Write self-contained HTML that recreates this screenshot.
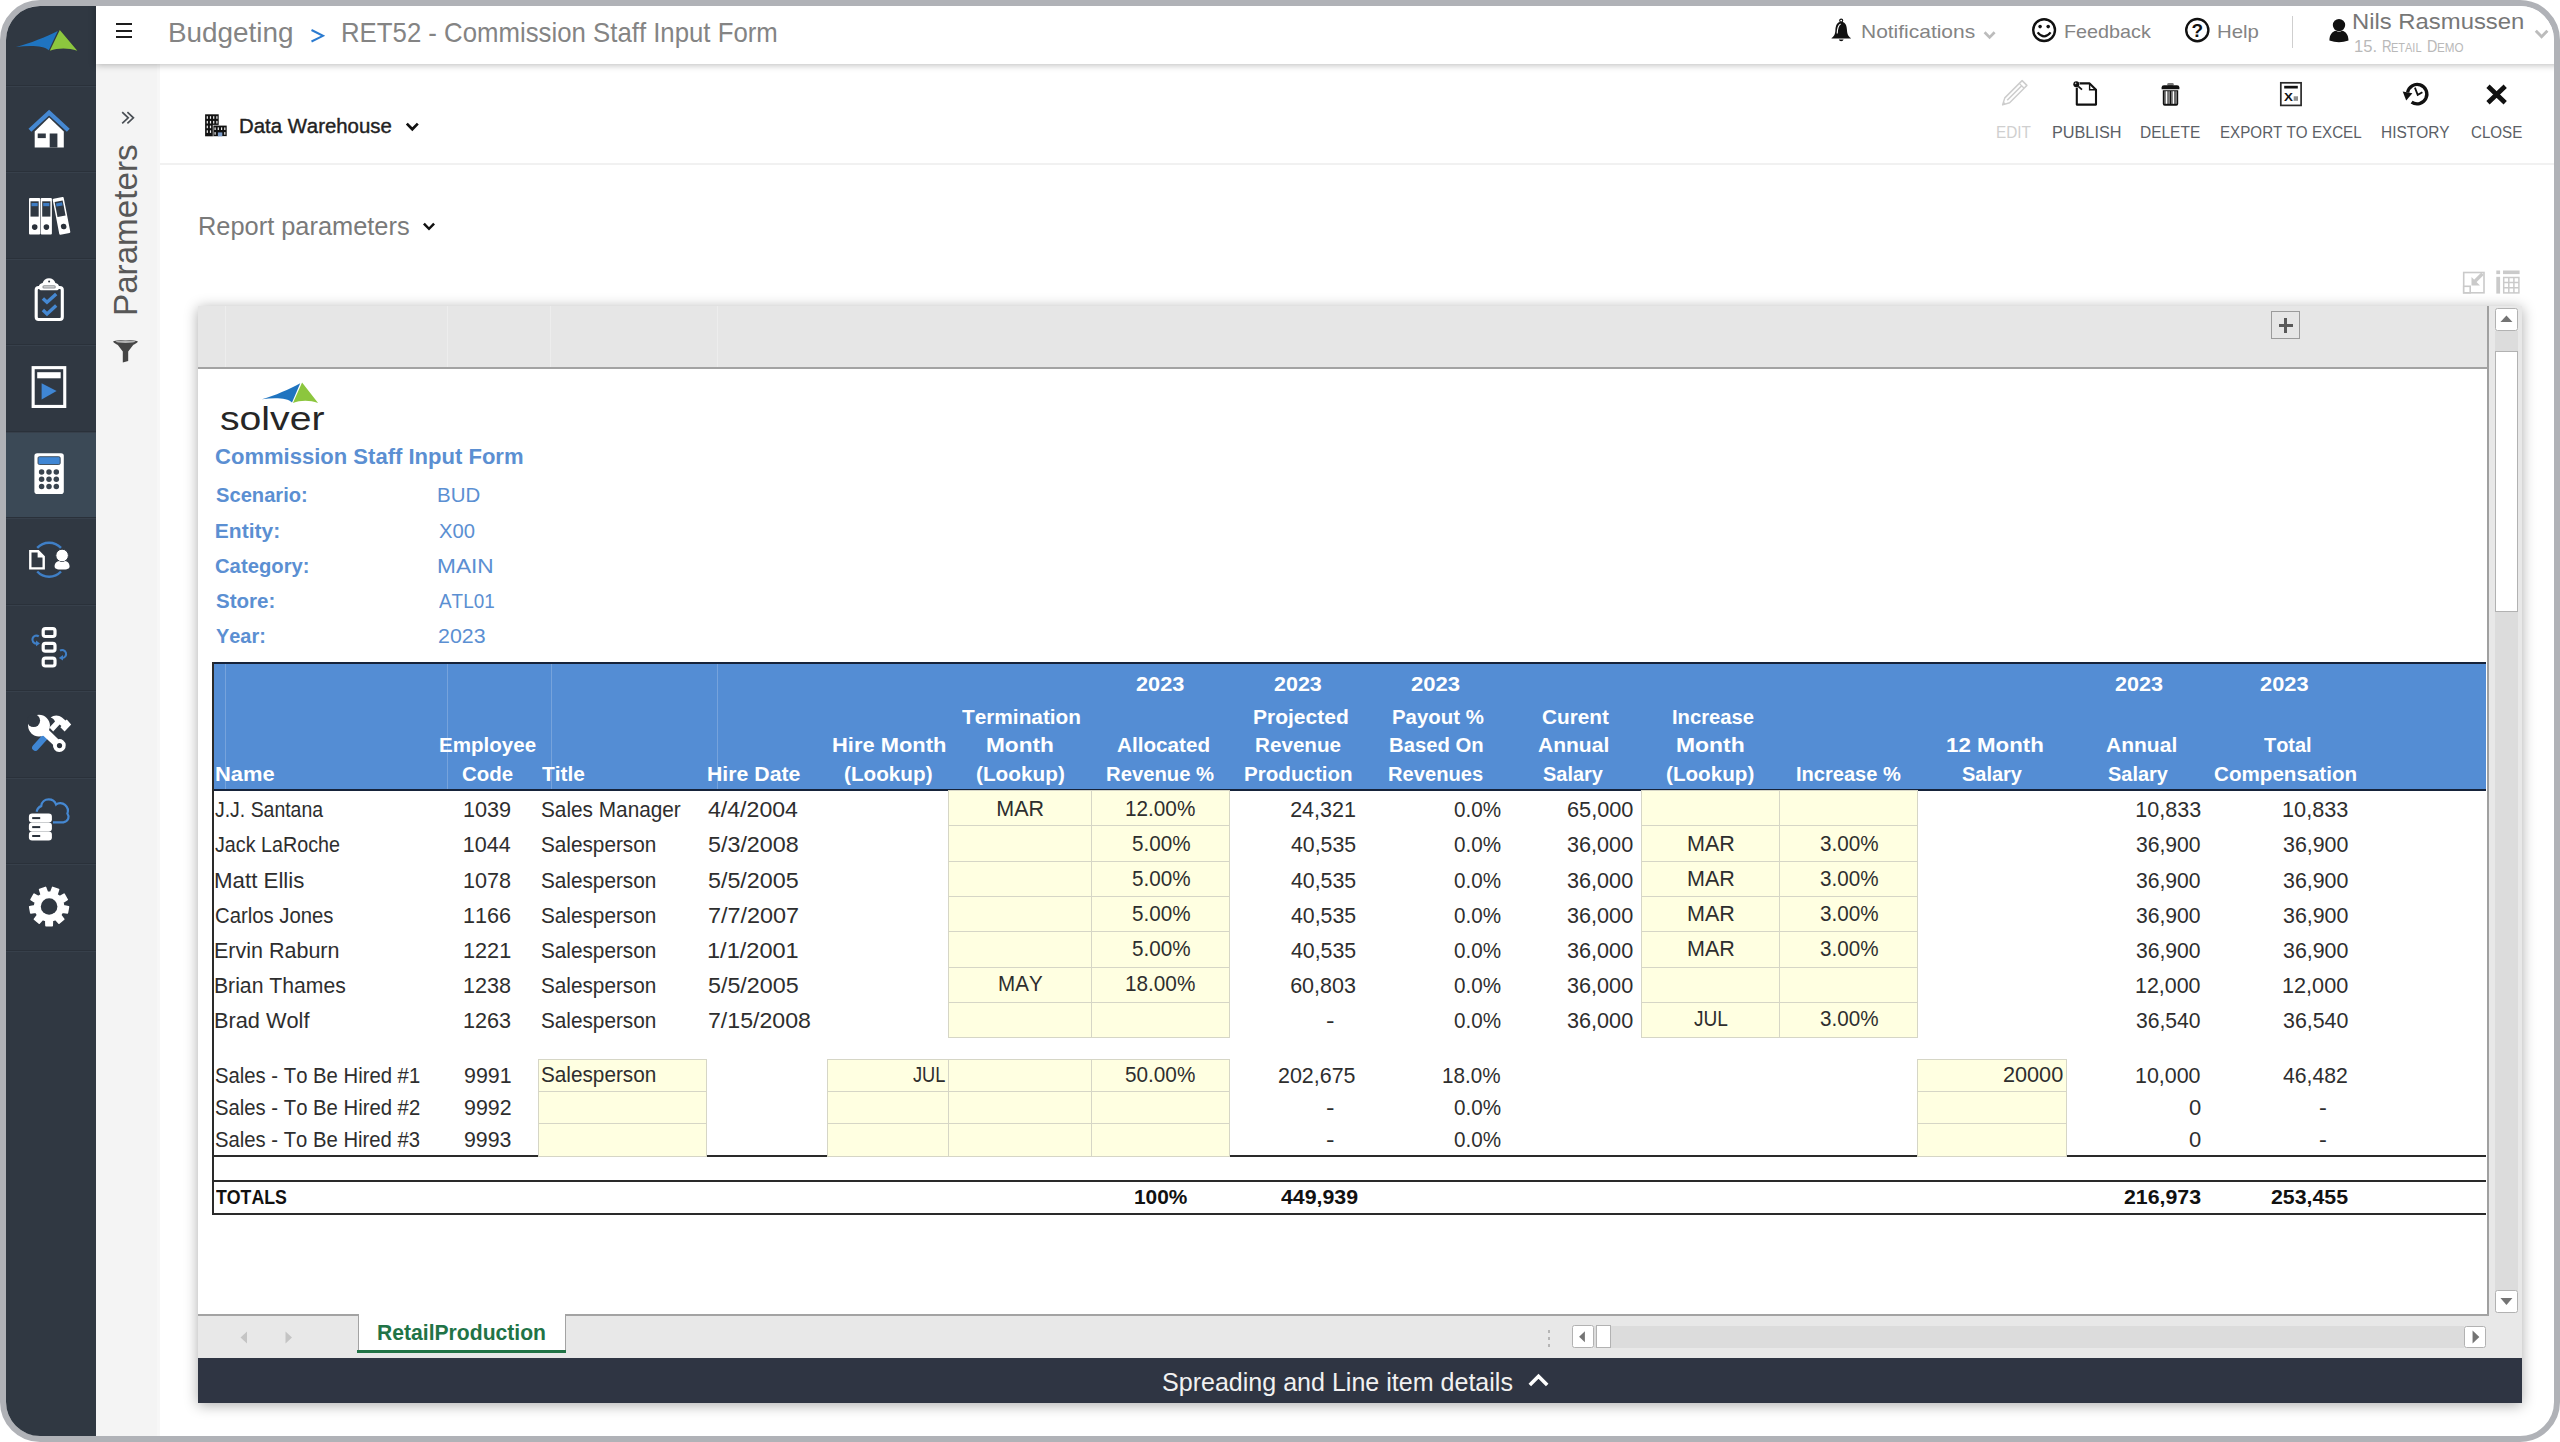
<!DOCTYPE html>
<html><head><meta charset="utf-8"><title>RET52 - Commission Staff Input Form</title>
<style>
html,body{margin:0;padding:0;background:#fff;}
body{width:2560px;height:1442px;overflow:hidden;position:relative;font-family:"Liberation Sans",sans-serif;font-kerning:none;}
#frame{position:absolute;left:0;top:0;width:2548px;height:1430px;border:6px solid #b0b2b7;border-radius:40px;overflow:hidden;background:#fff;}
#pg{position:absolute;left:-6px;top:-6px;width:2560px;height:1442px;}
#pg div,#pg span,#pg svg{position:absolute;}
.t{white-space:nowrap;line-height:1;transform-origin:0 50%;z-index:5;}
</style></head><body><div id="frame"><div id="pg">
<div style="left:0px;top:0px;width:96px;height:1442px;background:#303842;"></div>
<div style="left:6px;top:432px;width:90px;height:86px;background:#3b4956;"></div>
<div style="left:6px;top:84.5px;width:90px;height:1px;background:#2a313a;"></div>
<div style="left:6px;top:85.5px;width:90px;height:1px;background:#37404b;"></div>
<div style="left:6px;top:171px;width:90px;height:1px;background:#2a313a;"></div>
<div style="left:6px;top:172px;width:90px;height:1px;background:#37404b;"></div>
<div style="left:6px;top:257.5px;width:90px;height:1px;background:#2a313a;"></div>
<div style="left:6px;top:258.5px;width:90px;height:1px;background:#37404b;"></div>
<div style="left:6px;top:344px;width:90px;height:1px;background:#2a313a;"></div>
<div style="left:6px;top:345px;width:90px;height:1px;background:#37404b;"></div>
<div style="left:6px;top:430.5px;width:90px;height:1px;background:#2a313a;"></div>
<div style="left:6px;top:431.5px;width:90px;height:1px;background:#37404b;"></div>
<div style="left:6px;top:517px;width:90px;height:1px;background:#2a313a;"></div>
<div style="left:6px;top:518px;width:90px;height:1px;background:#37404b;"></div>
<div style="left:6px;top:603.5px;width:90px;height:1px;background:#2a313a;"></div>
<div style="left:6px;top:604.5px;width:90px;height:1px;background:#37404b;"></div>
<div style="left:6px;top:690px;width:90px;height:1px;background:#2a313a;"></div>
<div style="left:6px;top:691px;width:90px;height:1px;background:#37404b;"></div>
<div style="left:6px;top:776.5px;width:90px;height:1px;background:#2a313a;"></div>
<div style="left:6px;top:777.5px;width:90px;height:1px;background:#37404b;"></div>
<div style="left:6px;top:863px;width:90px;height:1px;background:#2a313a;"></div>
<div style="left:6px;top:864px;width:90px;height:1px;background:#37404b;"></div>
<div style="left:6px;top:949.5px;width:90px;height:1px;background:#2a313a;"></div>
<div style="left:6px;top:950.5px;width:90px;height:1px;background:#37404b;"></div>
<div style="left:96px;top:64px;width:64px;height:1378px;background:#f4f4f4;"></div>
<div style="left:157px;top:64px;width:3px;height:1378px;background:#f7f7f7;"></div>
<div style="left:160px;top:163px;width:2400px;height:2px;background:#f1f1f1;"></div>
<div style="left:96px;top:0px;width:2464px;height:64px;background:#fff;box-shadow:0 1px 7px rgba(0,0,0,.28);"></div>
<div style="left:198px;top:306px;width:2324px;height:1097px;background:#fff;box-shadow:0 2px 13px rgba(0,0,0,.33);"></div>
<div style="left:198px;top:306px;width:2289px;height:61px;background:#e6e6e6;"></div>
<div style="left:224.5px;top:306px;width:1px;height:61px;background:rgba(255,255,255,.3);"></div>
<div style="left:447.0px;top:306px;width:1px;height:61px;background:rgba(255,255,255,.3);"></div>
<div style="left:550.0px;top:306px;width:1px;height:61px;background:rgba(255,255,255,.3);"></div>
<div style="left:717.0px;top:306px;width:1px;height:61px;background:rgba(255,255,255,.3);"></div>
<div style="left:198px;top:366.5px;width:2291px;height:2px;background:#a3a3a3;"></div>
<div style="left:2489px;top:306px;width:33px;height:1052px;background:#e8e8e8;"></div>
<div style="left:2487px;top:306px;width:2px;height:1010px;background:#a0a0a0;"></div>
<div style="left:2495px;top:331px;width:23px;height:960px;background:#dcdcdc;"></div>
<div style="left:198px;top:1315px;width:2324px;height:43px;background:#e8e8e8;"></div>
<div style="left:198px;top:1313.5px;width:2291px;height:2px;background:#a3a3a3;"></div>
<div style="left:198px;top:1358px;width:2324px;height:45px;background:#2f3543;"></div>
<div style="left:214px;top:664px;width:2272px;height:126px;background:#548dd4;"></div>
<div style="left:224.5px;top:664px;width:1px;height:126px;background:rgba(255,255,255,.2);"></div>
<div style="left:447.0px;top:664px;width:1px;height:126px;background:rgba(255,255,255,.2);"></div>
<div style="left:550.5px;top:664px;width:1px;height:126px;background:rgba(255,255,255,.2);"></div>
<div style="left:717.0px;top:664px;width:1px;height:126px;background:rgba(255,255,255,.2);"></div>
<div style="left:212px;top:662px;width:2274px;height:2px;background:#16233a;"></div>
<div style="left:212px;top:789px;width:2274px;height:2px;background:#16233a;"></div>
<div style="left:212px;top:662px;width:2px;height:553px;background:#2a2a2a;"></div>
<div style="left:212px;top:1155.2px;width:2274px;height:1.7px;background:#2a2a2a;"></div>
<div style="left:212px;top:1180.3px;width:2274px;height:1.7px;background:#2a2a2a;"></div>
<div style="left:212px;top:1213.2px;width:2274px;height:1.7px;background:#2a2a2a;"></div>
<div style="left:948.75px;top:790px;width:280.75px;height:247.5999999999999px;background:#ffffe1;"></div>
<div style="left:948.25px;top:789.5px;width:281.75px;height:1.2px;background:#d6d6c6;"></div>
<div style="left:948.25px;top:825.3px;width:281.75px;height:1.2px;background:#d6d6c6;"></div>
<div style="left:948.25px;top:860.6px;width:281.75px;height:1.2px;background:#d6d6c6;"></div>
<div style="left:948.25px;top:895.9px;width:281.75px;height:1.2px;background:#d6d6c6;"></div>
<div style="left:948.25px;top:931.2px;width:281.75px;height:1.2px;background:#d6d6c6;"></div>
<div style="left:948.25px;top:966.5px;width:281.75px;height:1.2px;background:#d6d6c6;"></div>
<div style="left:948.25px;top:1001.8px;width:281.75px;height:1.2px;background:#d6d6c6;"></div>
<div style="left:948.25px;top:1037.1px;width:281.75px;height:1.2px;background:#d6d6c6;"></div>
<div style="left:948.25px;top:789.5px;width:1.2px;height:248.5999999999999px;background:#d6d6c6;"></div>
<div style="left:1090.75px;top:789.5px;width:1.2px;height:248.5999999999999px;background:#d6d6c6;"></div>
<div style="left:1229.0px;top:789.5px;width:1.2px;height:248.5999999999999px;background:#d6d6c6;"></div>
<div style="left:1641.75px;top:790px;width:275.75px;height:247.5999999999999px;background:#ffffe1;"></div>
<div style="left:1641.25px;top:789.5px;width:276.75px;height:1.2px;background:#d6d6c6;"></div>
<div style="left:1641.25px;top:825.3px;width:276.75px;height:1.2px;background:#d6d6c6;"></div>
<div style="left:1641.25px;top:860.6px;width:276.75px;height:1.2px;background:#d6d6c6;"></div>
<div style="left:1641.25px;top:895.9px;width:276.75px;height:1.2px;background:#d6d6c6;"></div>
<div style="left:1641.25px;top:931.2px;width:276.75px;height:1.2px;background:#d6d6c6;"></div>
<div style="left:1641.25px;top:966.5px;width:276.75px;height:1.2px;background:#d6d6c6;"></div>
<div style="left:1641.25px;top:1001.8px;width:276.75px;height:1.2px;background:#d6d6c6;"></div>
<div style="left:1641.25px;top:1037.1px;width:276.75px;height:1.2px;background:#d6d6c6;"></div>
<div style="left:1641.25px;top:789.5px;width:1.2px;height:248.5999999999999px;background:#d6d6c6;"></div>
<div style="left:1779.0px;top:789.5px;width:1.2px;height:248.5999999999999px;background:#d6d6c6;"></div>
<div style="left:1917.0px;top:789.5px;width:1.2px;height:248.5999999999999px;background:#d6d6c6;"></div>
<div style="left:538.75px;top:1059.5px;width:167.5px;height:96.5px;background:#ffffe1;"></div>
<div style="left:538.25px;top:1059.0px;width:168.5px;height:1.2px;background:#d6d6c6;"></div>
<div style="left:538.25px;top:1090.75px;width:168.5px;height:1.2px;background:#d6d6c6;"></div>
<div style="left:538.25px;top:1123.25px;width:168.5px;height:1.2px;background:#d6d6c6;"></div>
<div style="left:538.25px;top:1155.5px;width:168.5px;height:1.2px;background:#d6d6c6;"></div>
<div style="left:538.25px;top:1059.0px;width:1.2px;height:97.5px;background:#d6d6c6;"></div>
<div style="left:705.75px;top:1059.0px;width:1.2px;height:97.5px;background:#d6d6c6;"></div>
<div style="left:827.5px;top:1059.5px;width:402.0px;height:96.5px;background:#ffffe1;"></div>
<div style="left:827.0px;top:1059.0px;width:403.0px;height:1.2px;background:#d6d6c6;"></div>
<div style="left:827.0px;top:1090.75px;width:403.0px;height:1.2px;background:#d6d6c6;"></div>
<div style="left:827.0px;top:1123.25px;width:403.0px;height:1.2px;background:#d6d6c6;"></div>
<div style="left:827.0px;top:1155.5px;width:403.0px;height:1.2px;background:#d6d6c6;"></div>
<div style="left:827.0px;top:1059.0px;width:1.2px;height:97.5px;background:#d6d6c6;"></div>
<div style="left:948.25px;top:1059.0px;width:1.2px;height:97.5px;background:#d6d6c6;"></div>
<div style="left:1090.75px;top:1059.0px;width:1.2px;height:97.5px;background:#d6d6c6;"></div>
<div style="left:1229.0px;top:1059.0px;width:1.2px;height:97.5px;background:#d6d6c6;"></div>
<div style="left:1917.25px;top:1059.5px;width:149.5px;height:96.5px;background:#ffffe1;"></div>
<div style="left:1916.75px;top:1059.0px;width:150.5px;height:1.2px;background:#d6d6c6;"></div>
<div style="left:1916.75px;top:1090.75px;width:150.5px;height:1.2px;background:#d6d6c6;"></div>
<div style="left:1916.75px;top:1123.25px;width:150.5px;height:1.2px;background:#d6d6c6;"></div>
<div style="left:1916.75px;top:1155.5px;width:150.5px;height:1.2px;background:#d6d6c6;"></div>
<div style="left:1916.75px;top:1059.0px;width:1.2px;height:97.5px;background:#d6d6c6;"></div>
<div style="left:2066.25px;top:1059.0px;width:1.2px;height:97.5px;background:#d6d6c6;"></div>
<span class="t" style="left:215.35px;top:447px;font-size:21.5px;font-weight:700;color:#5b8fd2;transform:scaleX(1.0250);">Commission Staff Input Form</span>
<span class="t" style="left:215.67px;top:484px;font-size:21px;font-weight:700;color:#5b8fd2;transform:scaleX(0.9589);">Scenario:</span>
<span class="t" style="left:437.32px;top:484px;font-size:21px;font-weight:400;color:#5b8fd2;transform:scaleX(0.9732);">BUD</span>
<span class="t" style="left:214.85px;top:520px;font-size:21px;font-weight:700;color:#5b8fd2;">Entity:</span>
<span class="t" style="left:438.55px;top:520px;font-size:21px;font-weight:400;color:#5b8fd2;transform:scaleX(0.9631);">X00</span>
<span class="t" style="left:215.42px;top:555px;font-size:21px;font-weight:700;color:#5b8fd2;transform:scaleX(0.9643);">Category:</span>
<span class="t" style="left:437.14px;top:555px;font-size:21px;font-weight:400;color:#5b8fd2;transform:scaleX(1.0802);">MAIN</span>
<span class="t" style="left:215.66px;top:590px;font-size:21px;font-weight:700;color:#5b8fd2;transform:scaleX(0.9774);">Store:</span>
<span class="t" style="left:438.96px;top:590px;font-size:21px;font-weight:400;color:#5b8fd2;transform:scaleX(0.9004);">ATL01</span>
<span class="t" style="left:215.91px;top:625px;font-size:21px;font-weight:700;color:#5b8fd2;transform:scaleX(0.9471);">Year:</span>
<span class="t" style="left:437.93px;top:625px;font-size:21px;font-weight:400;color:#5b8fd2;transform:scaleX(1.0170);">2023</span>
<span class="t" style="left:214.78px;top:765px;font-size:19.5px;font-weight:700;color:#fff;transform:scaleX(1.1241);">Name</span>
<span class="t" style="left:438.63px;top:736px;font-size:19.5px;font-weight:700;color:#fff;transform:scaleX(1.0538);">Employee</span>
<span class="t" style="left:461.66px;top:765px;font-size:19.5px;font-weight:700;color:#fff;transform:scaleX(1.0469);">Code</span>
<span class="t" style="left:542.27px;top:765px;font-size:19.5px;font-weight:700;color:#fff;transform:scaleX(1.0712);">Title</span>
<span class="t" style="left:707.33px;top:765px;font-size:19.5px;font-weight:700;color:#fff;transform:scaleX(1.0908);">Hire Date</span>
<span class="t" style="left:831.54px;top:736px;font-size:19.5px;font-weight:700;color:#fff;transform:scaleX(1.1227);">Hire Month</span>
<span class="t" style="left:844.47px;top:765px;font-size:19.5px;font-weight:700;color:#fff;transform:scaleX(1.0620);">(Lookup)</span>
<span class="t" style="left:961.77px;top:708px;font-size:19.5px;font-weight:700;color:#fff;transform:scaleX(1.0666);">Termination</span>
<span class="t" style="left:986.49px;top:736px;font-size:19.5px;font-weight:700;color:#fff;transform:scaleX(1.1613);">Month</span>
<span class="t" style="left:975.97px;top:765px;font-size:19.5px;font-weight:700;color:#fff;transform:scaleX(1.0651);">(Lookup)</span>
<span class="t" style="left:1136.25px;top:675px;font-size:19.5px;font-weight:700;color:#fff;transform:scaleX(1.1128);">2023</span>
<span class="t" style="left:1116.98px;top:736px;font-size:19.5px;font-weight:700;color:#fff;transform:scaleX(1.0609);">Allocated</span>
<span class="t" style="left:1106.14px;top:765px;font-size:19.5px;font-weight:700;color:#fff;transform:scaleX(1.0393);">Revenue %</span>
<span class="t" style="left:1274.26px;top:675px;font-size:19.5px;font-weight:700;color:#fff;transform:scaleX(1.1009);">2023</span>
<span class="t" style="left:1253.09px;top:708px;font-size:19.5px;font-weight:700;color:#fff;transform:scaleX(1.0778);">Projected</span>
<span class="t" style="left:1254.62px;top:736px;font-size:19.5px;font-weight:700;color:#fff;transform:scaleX(1.0589);">Revenue</span>
<span class="t" style="left:1243.62px;top:765px;font-size:19.5px;font-weight:700;color:#fff;transform:scaleX(1.0557);">Production</span>
<span class="t" style="left:1411.24px;top:675px;font-size:19.5px;font-weight:700;color:#fff;transform:scaleX(1.1307);">2023</span>
<span class="t" style="left:1392.38px;top:708px;font-size:19.5px;font-weight:700;color:#fff;transform:scaleX(1.0470);">Payout %</span>
<span class="t" style="left:1388.64px;top:736px;font-size:19.5px;font-weight:700;color:#fff;transform:scaleX(1.0393);">Based On</span>
<span class="t" style="left:1388.15px;top:765px;font-size:19.5px;font-weight:700;color:#fff;transform:scaleX(1.0329);">Revenues</span>
<span class="t" style="left:1542.15px;top:708px;font-size:19.5px;font-weight:700;color:#fff;transform:scaleX(1.0638);">Curent</span>
<span class="t" style="left:1538.23px;top:736px;font-size:19.5px;font-weight:700;color:#fff;transform:scaleX(1.0782);">Annual</span>
<span class="t" style="left:1543.18px;top:765px;font-size:19.5px;font-weight:700;color:#fff;transform:scaleX(1.0234);">Salary</span>
<span class="t" style="left:1672.40px;top:708px;font-size:19.5px;font-weight:700;color:#fff;transform:scaleX(1.0365);">Increase</span>
<span class="t" style="left:1676.47px;top:736px;font-size:19.5px;font-weight:700;color:#fff;transform:scaleX(1.1747);">Month</span>
<span class="t" style="left:1666.47px;top:765px;font-size:19.5px;font-weight:700;color:#fff;transform:scaleX(1.0590);">(Lookup)</span>
<span class="t" style="left:1795.66px;top:765px;font-size:19.5px;font-weight:700;color:#fff;transform:scaleX(1.0291);">Increase %</span>
<span class="t" style="left:1946.10px;top:736px;font-size:19.5px;font-weight:700;color:#fff;transform:scaleX(1.1424);">12 Month</span>
<span class="t" style="left:1961.93px;top:765px;font-size:19.5px;font-weight:700;color:#fff;transform:scaleX(1.0234);">Salary</span>
<span class="t" style="left:2114.75px;top:675px;font-size:19.5px;font-weight:700;color:#fff;transform:scaleX(1.1069);">2023</span>
<span class="t" style="left:2105.73px;top:736px;font-size:19.5px;font-weight:700;color:#fff;transform:scaleX(1.0782);">Annual</span>
<span class="t" style="left:2108.18px;top:765px;font-size:19.5px;font-weight:700;color:#fff;transform:scaleX(1.0234);">Salary</span>
<span class="t" style="left:2260.49px;top:675px;font-size:19.5px;font-weight:700;color:#fff;transform:scaleX(1.1188);">2023</span>
<span class="t" style="left:2264.28px;top:736px;font-size:19.5px;font-weight:700;color:#fff;transform:scaleX(1.0224);">Total</span>
<span class="t" style="left:2213.65px;top:765px;font-size:19.5px;font-weight:700;color:#fff;transform:scaleX(1.0567);">Compensation</span>
<span class="t" style="left:215.45px;top:800px;font-size:21.5px;font-weight:400;color:#2e2e2e;transform:scaleX(0.9040);">J.J. Santana</span>
<span class="t" style="left:462.85px;top:800px;font-size:21.5px;font-weight:400;color:#2e2e2e;transform:scaleX(1.0069);">1039</span>
<span class="t" style="left:541.06px;top:800px;font-size:21.5px;font-weight:400;color:#2e2e2e;transform:scaleX(0.9666);">Sales Manager</span>
<span class="t" style="left:708.22px;top:800px;font-size:21.5px;font-weight:400;color:#2e2e2e;transform:scaleX(1.0747);">4/4/2004</span>
<span class="t" style="left:996.24px;top:799px;font-size:21.5px;font-weight:400;color:#2e2e2e;">MAR</span>
<span class="t" style="left:1125.42px;top:799px;font-size:21.5px;font-weight:400;color:#2e2e2e;transform:scaleX(0.9643);">12.00%</span>
<span class="t" style="left:1290.17px;top:800px;font-size:21.5px;font-weight:400;color:#2e2e2e;">24,321</span>
<span class="t" style="left:1453.69px;top:800px;font-size:21.5px;font-weight:400;color:#2e2e2e;transform:scaleX(0.9597);">0.0%</span>
<span class="t" style="left:1566.90px;top:800px;font-size:21.5px;font-weight:400;color:#2e2e2e;transform:scaleX(1.0104);">65,000</span>
<span class="t" style="left:2135.37px;top:800px;font-size:21.5px;font-weight:400;color:#2e2e2e;">10,833</span>
<span class="t" style="left:2282.10px;top:800px;font-size:21.5px;font-weight:400;color:#2e2e2e;transform:scaleX(1.0090);">10,833</span>
<span class="t" style="left:215.44px;top:835px;font-size:21.5px;font-weight:400;color:#2e2e2e;transform:scaleX(0.9169);">Jack LaRoche</span>
<span class="t" style="left:462.87px;top:835px;font-size:21.5px;font-weight:400;color:#2e2e2e;">1044</span>
<span class="t" style="left:541.06px;top:835px;font-size:21.5px;font-weight:400;color:#2e2e2e;transform:scaleX(0.9645);">Salesperson</span>
<span class="t" style="left:707.82px;top:835px;font-size:21.5px;font-weight:400;color:#2e2e2e;transform:scaleX(1.0835);">5/3/2008</span>
<span class="t" style="left:1131.67px;top:834px;font-size:21.5px;font-weight:400;color:#2e2e2e;transform:scaleX(0.9605);">5.00%</span>
<span class="t" style="left:1290.76px;top:835px;font-size:21.5px;font-weight:400;color:#2e2e2e;transform:scaleX(0.9904);">40,535</span>
<span class="t" style="left:1453.69px;top:835px;font-size:21.5px;font-weight:400;color:#2e2e2e;transform:scaleX(0.9597);">0.0%</span>
<span class="t" style="left:1567.18px;top:835px;font-size:21.5px;font-weight:400;color:#2e2e2e;transform:scaleX(1.0061);">36,000</span>
<span class="t" style="left:1686.99px;top:834px;font-size:21.5px;font-weight:400;color:#2e2e2e;">MAR</span>
<span class="t" style="left:1819.71px;top:834px;font-size:21.5px;font-weight:400;color:#2e2e2e;transform:scaleX(0.9599);">3.00%</span>
<span class="t" style="left:2136.20px;top:835px;font-size:21.5px;font-weight:400;color:#2e2e2e;transform:scaleX(0.9827);">36,900</span>
<span class="t" style="left:2282.94px;top:835px;font-size:21.5px;font-weight:400;color:#2e2e2e;transform:scaleX(0.9944);">36,900</span>
<span class="t" style="left:213.92px;top:871px;font-size:21.5px;font-weight:400;color:#2e2e2e;transform:scaleX(1.0363);">Matt Ellis</span>
<span class="t" style="left:462.85px;top:871px;font-size:21.5px;font-weight:400;color:#2e2e2e;transform:scaleX(1.0050);">1078</span>
<span class="t" style="left:541.06px;top:871px;font-size:21.5px;font-weight:400;color:#2e2e2e;transform:scaleX(0.9645);">Salesperson</span>
<span class="t" style="left:707.82px;top:871px;font-size:21.5px;font-weight:400;color:#2e2e2e;transform:scaleX(1.0831);">5/5/2005</span>
<span class="t" style="left:1131.67px;top:869px;font-size:21.5px;font-weight:400;color:#2e2e2e;transform:scaleX(0.9605);">5.00%</span>
<span class="t" style="left:1290.76px;top:871px;font-size:21.5px;font-weight:400;color:#2e2e2e;transform:scaleX(0.9904);">40,535</span>
<span class="t" style="left:1453.69px;top:871px;font-size:21.5px;font-weight:400;color:#2e2e2e;transform:scaleX(0.9597);">0.0%</span>
<span class="t" style="left:1567.18px;top:871px;font-size:21.5px;font-weight:400;color:#2e2e2e;transform:scaleX(1.0061);">36,000</span>
<span class="t" style="left:1686.99px;top:869px;font-size:21.5px;font-weight:400;color:#2e2e2e;">MAR</span>
<span class="t" style="left:1819.71px;top:869px;font-size:21.5px;font-weight:400;color:#2e2e2e;transform:scaleX(0.9599);">3.00%</span>
<span class="t" style="left:2136.20px;top:871px;font-size:21.5px;font-weight:400;color:#2e2e2e;transform:scaleX(0.9827);">36,900</span>
<span class="t" style="left:2282.94px;top:871px;font-size:21.5px;font-weight:400;color:#2e2e2e;transform:scaleX(0.9944);">36,900</span>
<span class="t" style="left:214.72px;top:906px;font-size:21.5px;font-weight:400;color:#2e2e2e;transform:scaleX(0.9445);">Carlos Jones</span>
<span class="t" style="left:462.85px;top:906px;font-size:21.5px;font-weight:400;color:#2e2e2e;transform:scaleX(1.0053);">1166</span>
<span class="t" style="left:541.06px;top:906px;font-size:21.5px;font-weight:400;color:#2e2e2e;transform:scaleX(0.9645);">Salesperson</span>
<span class="t" style="left:707.55px;top:906px;font-size:21.5px;font-weight:400;color:#2e2e2e;transform:scaleX(1.0887);">7/7/2007</span>
<span class="t" style="left:1131.67px;top:904px;font-size:21.5px;font-weight:400;color:#2e2e2e;transform:scaleX(0.9605);">5.00%</span>
<span class="t" style="left:1290.76px;top:906px;font-size:21.5px;font-weight:400;color:#2e2e2e;transform:scaleX(0.9904);">40,535</span>
<span class="t" style="left:1453.69px;top:906px;font-size:21.5px;font-weight:400;color:#2e2e2e;transform:scaleX(0.9597);">0.0%</span>
<span class="t" style="left:1567.18px;top:906px;font-size:21.5px;font-weight:400;color:#2e2e2e;transform:scaleX(1.0061);">36,000</span>
<span class="t" style="left:1686.99px;top:904px;font-size:21.5px;font-weight:400;color:#2e2e2e;">MAR</span>
<span class="t" style="left:1819.71px;top:904px;font-size:21.5px;font-weight:400;color:#2e2e2e;transform:scaleX(0.9599);">3.00%</span>
<span class="t" style="left:2136.20px;top:906px;font-size:21.5px;font-weight:400;color:#2e2e2e;transform:scaleX(0.9827);">36,900</span>
<span class="t" style="left:2282.94px;top:906px;font-size:21.5px;font-weight:400;color:#2e2e2e;transform:scaleX(0.9944);">36,900</span>
<span class="t" style="left:213.99px;top:941px;font-size:21.5px;font-weight:400;color:#2e2e2e;">Ervin Raburn</span>
<span class="t" style="left:462.85px;top:941px;font-size:21.5px;font-weight:400;color:#2e2e2e;transform:scaleX(1.0076);">1221</span>
<span class="t" style="left:541.06px;top:941px;font-size:21.5px;font-weight:400;color:#2e2e2e;transform:scaleX(0.9645);">Salesperson</span>
<span class="t" style="left:706.96px;top:941px;font-size:21.5px;font-weight:400;color:#2e2e2e;transform:scaleX(1.0955);">1/1/2001</span>
<span class="t" style="left:1131.67px;top:939px;font-size:21.5px;font-weight:400;color:#2e2e2e;transform:scaleX(0.9605);">5.00%</span>
<span class="t" style="left:1290.76px;top:941px;font-size:21.5px;font-weight:400;color:#2e2e2e;transform:scaleX(0.9904);">40,535</span>
<span class="t" style="left:1453.69px;top:941px;font-size:21.5px;font-weight:400;color:#2e2e2e;transform:scaleX(0.9597);">0.0%</span>
<span class="t" style="left:1567.18px;top:941px;font-size:21.5px;font-weight:400;color:#2e2e2e;transform:scaleX(1.0061);">36,000</span>
<span class="t" style="left:1686.99px;top:939px;font-size:21.5px;font-weight:400;color:#2e2e2e;">MAR</span>
<span class="t" style="left:1819.71px;top:939px;font-size:21.5px;font-weight:400;color:#2e2e2e;transform:scaleX(0.9599);">3.00%</span>
<span class="t" style="left:2136.20px;top:941px;font-size:21.5px;font-weight:400;color:#2e2e2e;transform:scaleX(0.9827);">36,900</span>
<span class="t" style="left:2282.94px;top:941px;font-size:21.5px;font-weight:400;color:#2e2e2e;transform:scaleX(0.9944);">36,900</span>
<span class="t" style="left:214.01px;top:976px;font-size:21.5px;font-weight:400;color:#2e2e2e;transform:scaleX(0.9844);">Brian Thames</span>
<span class="t" style="left:462.85px;top:976px;font-size:21.5px;font-weight:400;color:#2e2e2e;transform:scaleX(1.0050);">1238</span>
<span class="t" style="left:541.06px;top:976px;font-size:21.5px;font-weight:400;color:#2e2e2e;transform:scaleX(0.9645);">Salesperson</span>
<span class="t" style="left:707.82px;top:976px;font-size:21.5px;font-weight:400;color:#2e2e2e;transform:scaleX(1.0831);">5/5/2005</span>
<span class="t" style="left:997.81px;top:974px;font-size:21.5px;font-weight:400;color:#2e2e2e;transform:scaleX(0.9581);">MAY</span>
<span class="t" style="left:1125.42px;top:974px;font-size:21.5px;font-weight:400;color:#2e2e2e;transform:scaleX(0.9643);">18.00%</span>
<span class="t" style="left:1290.16px;top:976px;font-size:21.5px;font-weight:400;color:#2e2e2e;">60,803</span>
<span class="t" style="left:1453.69px;top:976px;font-size:21.5px;font-weight:400;color:#2e2e2e;transform:scaleX(0.9597);">0.0%</span>
<span class="t" style="left:1567.18px;top:976px;font-size:21.5px;font-weight:400;color:#2e2e2e;transform:scaleX(1.0061);">36,000</span>
<span class="t" style="left:2135.37px;top:976px;font-size:21.5px;font-weight:400;color:#2e2e2e;transform:scaleX(0.9954);">12,000</span>
<span class="t" style="left:2282.10px;top:976px;font-size:21.5px;font-weight:400;color:#2e2e2e;transform:scaleX(1.0073);">12,000</span>
<span class="t" style="left:213.97px;top:1011px;font-size:21.5px;font-weight:400;color:#2e2e2e;transform:scaleX(1.0118);">Brad Wolf</span>
<span class="t" style="left:462.85px;top:1011px;font-size:21.5px;font-weight:400;color:#2e2e2e;transform:scaleX(1.0053);">1263</span>
<span class="t" style="left:541.06px;top:1011px;font-size:21.5px;font-weight:400;color:#2e2e2e;transform:scaleX(0.9645);">Salesperson</span>
<span class="t" style="left:707.56px;top:1011px;font-size:21.5px;font-weight:400;color:#2e2e2e;transform:scaleX(1.0762);">7/15/2008</span>
<span class="t" style="left:1326.37px;top:1011px;font-size:21.5px;font-weight:400;color:#2e2e2e;transform:scaleX(1.1879);">-</span>
<span class="t" style="left:1453.69px;top:1011px;font-size:21.5px;font-weight:400;color:#2e2e2e;transform:scaleX(0.9597);">0.0%</span>
<span class="t" style="left:1567.18px;top:1011px;font-size:21.5px;font-weight:400;color:#2e2e2e;transform:scaleX(1.0061);">36,000</span>
<span class="t" style="left:1694.20px;top:1009px;font-size:21.5px;font-weight:400;color:#2e2e2e;transform:scaleX(0.8875);">JUL</span>
<span class="t" style="left:1819.71px;top:1009px;font-size:21.5px;font-weight:400;color:#2e2e2e;transform:scaleX(0.9599);">3.00%</span>
<span class="t" style="left:2136.20px;top:1011px;font-size:21.5px;font-weight:400;color:#2e2e2e;transform:scaleX(0.9827);">36,540</span>
<span class="t" style="left:2282.94px;top:1011px;font-size:21.5px;font-weight:400;color:#2e2e2e;transform:scaleX(0.9944);">36,540</span>
<span class="t" style="left:214.58px;top:1066px;font-size:21.5px;font-weight:400;color:#2e2e2e;transform:scaleX(0.9433);">Sales - To Be Hired #1</span>
<span class="t" style="left:463.50px;top:1066px;font-size:21.5px;font-weight:400;color:#2e2e2e;transform:scaleX(0.9938);">9991</span>
<span class="t" style="left:541.06px;top:1065px;font-size:21.5px;font-weight:400;color:#2e2e2e;transform:scaleX(0.9645);">Salesperson</span>
<span class="t" style="left:912.72px;top:1065px;font-size:21.5px;font-weight:400;color:#2e2e2e;transform:scaleX(0.8471);">JUL</span>
<span class="t" style="left:1125.42px;top:1065px;font-size:21.5px;font-weight:400;color:#2e2e2e;transform:scaleX(0.9643);">50.00%</span>
<span class="t" style="left:1278.42px;top:1066px;font-size:21.5px;font-weight:400;color:#2e2e2e;transform:scaleX(0.9969);">202,675</span>
<span class="t" style="left:1442.18px;top:1066px;font-size:21.5px;font-weight:400;color:#2e2e2e;transform:scaleX(0.9605);">18.0%</span>
<span class="t" style="left:2002.66px;top:1065px;font-size:21.5px;font-weight:400;color:#2e2e2e;transform:scaleX(1.0065);">20000</span>
<span class="t" style="left:2135.37px;top:1066px;font-size:21.5px;font-weight:400;color:#2e2e2e;transform:scaleX(0.9954);">10,000</span>
<span class="t" style="left:2283.26px;top:1066px;font-size:21.5px;font-weight:400;color:#2e2e2e;transform:scaleX(0.9853);">46,482</span>
<span class="t" style="left:214.58px;top:1098px;font-size:21.5px;font-weight:400;color:#2e2e2e;transform:scaleX(0.9434);">Sales - To Be Hired #2</span>
<span class="t" style="left:463.50px;top:1098px;font-size:21.5px;font-weight:400;color:#2e2e2e;transform:scaleX(0.9944);">9992</span>
<span class="t" style="left:1326.37px;top:1098px;font-size:21.5px;font-weight:400;color:#2e2e2e;transform:scaleX(1.1879);">-</span>
<span class="t" style="left:1453.69px;top:1098px;font-size:21.5px;font-weight:400;color:#2e2e2e;transform:scaleX(0.9597);">0.0%</span>
<span class="t" style="left:2188.64px;top:1098px;font-size:21.5px;font-weight:400;color:#2e2e2e;transform:scaleX(1.0205);">0</span>
<span class="t" style="left:2318.96px;top:1098px;font-size:21.5px;font-weight:400;color:#2e2e2e;transform:scaleX(1.0929);">-</span>
<span class="t" style="left:214.58px;top:1130px;font-size:21.5px;font-weight:400;color:#2e2e2e;transform:scaleX(0.9428);">Sales - To Be Hired #3</span>
<span class="t" style="left:463.50px;top:1130px;font-size:21.5px;font-weight:400;color:#2e2e2e;transform:scaleX(0.9915);">9993</span>
<span class="t" style="left:1326.37px;top:1130px;font-size:21.5px;font-weight:400;color:#2e2e2e;transform:scaleX(1.1879);">-</span>
<span class="t" style="left:1453.69px;top:1130px;font-size:21.5px;font-weight:400;color:#2e2e2e;transform:scaleX(0.9597);">0.0%</span>
<span class="t" style="left:2188.64px;top:1130px;font-size:21.5px;font-weight:400;color:#2e2e2e;transform:scaleX(1.0205);">0</span>
<span class="t" style="left:2318.96px;top:1130px;font-size:21.5px;font-weight:400;color:#2e2e2e;transform:scaleX(1.0929);">-</span>
<span class="t" style="left:216.05px;top:1188px;font-size:19.5px;font-weight:700;color:#111;transform:scaleX(0.9089);">TOTALS</span>
<span class="t" style="left:1134.19px;top:1188px;font-size:19.5px;font-weight:700;color:#111;transform:scaleX(1.0700);">100%</span>
<span class="t" style="left:1280.68px;top:1188px;font-size:19.5px;font-weight:700;color:#111;transform:scaleX(1.0938);">449,939</span>
<span class="t" style="left:2123.76px;top:1188px;font-size:19.5px;font-weight:700;color:#111;transform:scaleX(1.0923);">216,973</span>
<span class="t" style="left:2270.51px;top:1188px;font-size:19.5px;font-weight:700;color:#111;transform:scaleX(1.0934);">253,455</span>
<span class="t" style="left:168.21px;top:19px;font-size:28px;font-weight:400;color:#848484;transform:scaleX(0.9958);">Budgeting</span>
<span class="t" style="left:341.39px;top:19px;font-size:28px;font-weight:400;color:#848484;transform:scaleX(0.9204);">RET52 - Commission Staff Input Form</span>
<svg style="left:308px;top:27px;" width="20" height="18" viewBox="0 0 20 18"><polyline points="3.5,3 15,8.8 3.5,14.5" fill="none" stroke="#2b7bd0" stroke-width="2"/></svg>
<div style="left:115.6px;top:23.2px;width:16.4px;height:2.3px;background:#1d1d1d;"></div>
<div style="left:115.6px;top:29.6px;width:16.4px;height:2.3px;background:#1d1d1d;"></div>
<div style="left:115.6px;top:35.9px;width:16.4px;height:2.3px;background:#1d1d1d;"></div>
<span class="t" style="left:1860.78px;top:22px;font-size:19px;font-weight:400;color:#848484;transform:scaleX(1.1032);">Notifications</span>
<span class="t" style="left:2063.98px;top:22px;font-size:19px;font-weight:400;color:#848484;transform:scaleX(1.0400);">Feedback</span>
<span class="t" style="left:2217.33px;top:22px;font-size:19px;font-weight:400;color:#848484;transform:scaleX(1.0729);">Help</span>
<span class="t" style="left:2352.04px;top:11px;font-size:22px;font-weight:400;color:#777;transform:scaleX(1.0841);">Nils Rasmussen</span>
<span class="t" style="left:2354.04px;top:38px;font-size:17px;font-weight:400;color:#b9b9b9;transform:scaleX(0.9763);">15.</span>
<span class="t" style="left:2381.51px;top:38px;font-size:17px;font-weight:400;color:#b9b9b9;transform:scaleX(0.7823);">R</span>
<span class="t" style="left:2391.10px;top:41px;font-size:13px;font-weight:400;color:#b9b9b9;transform:scaleX(0.8447);">ETAIL</span>
<span class="t" style="left:2426.82px;top:38px;font-size:17px;font-weight:400;color:#b9b9b9;transform:scaleX(0.8438);">D</span>
<span class="t" style="left:2437.05px;top:41px;font-size:13px;font-weight:400;color:#b9b9b9;transform:scaleX(0.8949);">EMO</span>
<div style="left:2291.5px;top:16px;width:1.5px;height:32px;background:#cfcfcf;"></div>
<span class="t" style="left:1995.74px;top:125px;font-size:16px;font-weight:400;color:#cfcfcf;transform:scaleX(0.9576);">EDIT</span>
<span class="t" style="left:2051.67px;top:125px;font-size:16px;font-weight:400;color:#5b6066;transform:scaleX(1.0144);">PUBLISH</span>
<span class="t" style="left:2139.93px;top:125px;font-size:16px;font-weight:400;color:#5b6066;transform:scaleX(0.9676);">DELETE</span>
<span class="t" style="left:2219.56px;top:125px;font-size:16px;font-weight:400;color:#5b6066;transform:scaleX(0.9483);">EXPORT TO EXCEL</span>
<span class="t" style="left:2381.03px;top:125px;font-size:16px;font-weight:400;color:#5b6066;transform:scaleX(0.9646);">HISTORY</span>
<span class="t" style="left:2470.63px;top:125px;font-size:16px;font-weight:400;color:#5b6066;transform:scaleX(0.9460);">CLOSE</span>
<span class="t" style="left:238.83px;top:116px;font-size:20.5px;font-weight:400;color:#222;transform:scaleX(0.9930);-webkit-text-stroke:0.4px #222;">Data Warehouse</span>
<span class="t" style="left:197.52px;top:213px;font-size:26px;font-weight:400;color:#7a7a7a;transform:scaleX(0.9762);">Report parameters</span>
<span class="t" style="left:108.20px;top:315.62px;font-size:34px;color:#585858;transform-origin:0 0;transform:rotate(-90deg) scaleX(0.9761);">Parameters</span>
<span class="t" style="left:376.79px;top:1323px;font-size:21.5px;font-weight:700;color:#217346;transform:scaleX(0.9826);">RetailProduction</span>
<span class="t" style="left:1162.06px;top:1369px;font-size:26px;font-weight:400;color:#f1f1f1;transform:scaleX(0.9635);">Spreading and Line item details</span>
<div style="left:2494.8px;top:308px;width:23.3px;height:22.8px;background:#fff;border:1.3px solid #b2b2b2;border-radius:2.5px;box-sizing:border-box;"></div>
<div style="left:2494.8px;top:1290.2px;width:23.3px;height:22.6px;background:#fff;border:1.3px solid #b2b2b2;border-radius:2.5px;box-sizing:border-box;"></div>
<div style="left:2494.8px;top:350.8px;width:23.3px;height:261.4px;background:#fff;border:1.3px solid #b2b2b2;box-sizing:border-box;"></div>
<div style="left:1594px;top:1325.6px;width:870px;height:22.6px;background:#dcdcdc;"></div>
<div style="left:1571.6px;top:1325.4px;width:22.2px;height:22.9px;background:#fff;border:1.3px solid #b2b2b2;border-radius:2.5px;box-sizing:border-box;"></div>
<div style="left:1596px;top:1325.4px;width:14.6px;height:22.9px;background:#fff;border:1.3px solid #b2b2b2;box-sizing:border-box;"></div>
<div style="left:2464px;top:1325.6px;width:22.3px;height:22.6px;background:#fff;border:1.3px solid #b2b2b2;border-radius:2.5px;box-sizing:border-box;"></div>
<svg style="left:0;top:0;pointer-events:none" width="2560" height="1442"><polygon points="2500.4500000000003,322.0 2512.4500000000003,322.0 2506.4500000000003,315.4" fill="#747474"/><polygon points="2500.4500000000003,1298.1 2512.4500000000003,1298.1 2506.4500000000003,1304.9" fill="#747474"/><polygon points="1584.8999999999999,1331.3500000000001 1584.8999999999999,1342.3500000000001 1579.1,1336.8500000000001" fill="#747474"/><polygon points="2472.55,1330.3999999999999 2472.55,1343.3999999999999 2479.35,1336.8999999999999" fill="#747474"/></svg>
<div style="left:1547.7px;top:1330px;width:2.6px;height:2.6px;background:#b5b5b5;"></div>
<div style="left:1547.7px;top:1337px;width:2.6px;height:2.6px;background:#b5b5b5;"></div>
<div style="left:1547.7px;top:1344px;width:2.6px;height:2.6px;background:#b5b5b5;"></div>
<div style="left:2271px;top:311px;width:29px;height:28px;border:1.3px solid #9b9b9b;box-sizing:border-box;"></div>
<div style="left:2278.5px;top:323.7px;width:14.5px;height:3px;background:#595959;"></div>
<div style="left:2284.2px;top:318px;width:3px;height:14.5px;background:#595959;"></div>
<svg style="left:2460px;top:268px;" width="64" height="30" viewBox="0 0 64 30">
<rect x="3.7" y="4.5" width="20.3" height="20.3" fill="none" stroke="#cacaca" stroke-width="1.6"/>
<rect x="3.7" y="18.3" width="6.5" height="6.5" fill="#fff" stroke="#cacaca" stroke-width="1.6"/>
<path d="M22.5 5.8 L14.5 13.8" stroke="#cacaca" stroke-width="3.4"/>
<polygon points="11.5,9 11.5,17.5 20,17.5" fill="#cacaca"/>
<rect x="36.3" y="2.5" width="3.8" height="3.6" fill="#cacaca"/>
<rect x="36.3" y="8.8" width="3.8" height="16.8" fill="#cacaca"/>
<rect x="43" y="2.5" width="16.6" height="3.6" fill="#cacaca"/>
<g fill="none" stroke="#cacaca" stroke-width="1.5"><rect x="43.7" y="9.5" width="15.2" height="15.4"/><path d="M48.8 9.5v15.4M53.9 9.5v15.4M43.7 14.6h15.2M43.7 19.8h15.2"/></g>
</svg>
<div style="left:357.5px;top:1313.5px;width:208px;height:38px;background:#fff;border-left:1.3px solid #a3a3a3;border-right:1.3px solid #a3a3a3;box-sizing:border-box;"></div>
<div style="left:357px;top:1350px;width:209px;height:3.2px;background:#217346;"></div>
<svg style="left:236px;top:1328px;" width="60" height="20" viewBox="0 0 60 20"><polygon points="11,3.5 11,15.5 4.5,9.5" fill="#c4c4c4"/><polygon points="49.5,3.5 49.5,15.5 56,9.5" fill="#c4c4c4"/></svg>
<svg style="left:1525px;top:1370px;" width="28" height="20" viewBox="0 0 28 20"><polyline points="4.8,15 13.5,6.3 22.2,15" fill="none" stroke="#fff" stroke-width="3.6"/></svg>
<svg style="left:0;top:0" width="2560" height="420" viewBox="0 0 2560 420"><polygon points="2002.6,104.9 2009.6,102.7 2024.1,88.2 2026.9,85.4 2022.1,80.6 2019.3,83.4 2004.8,97.9" fill="none" stroke="#cdcdcd" stroke-width="1.5" stroke-linejoin="round"/><line x1="2007.2" y1="100.3" x2="2021.7" y2="85.8" stroke="#cdcdcd" stroke-width="1.6"/><line x1="2024.1" y1="88.2" x2="2019.3" y2="83.4" stroke="#cdcdcd" stroke-width="1.3"/><polygon points="2002.6,104.9 2005.9,103.9 2003.6,101.6" fill="#cdcdcd"/><path d="M2076.8 83.4H2089.6L2096 89.8V104.6H2076.8Z" fill="none" stroke="#111" stroke-width="2.1" stroke-linejoin="round"/><path d="M2089.6 83.4V89.8H2096" fill="none" stroke="#111" stroke-width="1.4"/><circle cx="2076.3" cy="84.3" r="3.5" fill="#fff"/><circle cx="2076.3" cy="84.3" r="3" fill="#111"/><circle cx="2075.6" cy="83.4" r="0.8" fill="#bbb"/><path d="M2078.3 86.3L2082 89.6" stroke="#111" stroke-width="1.7"/><rect x="2167.2" y="83" width="6.6" height="3" rx="1.4" fill="#777"/><path d="M2161.6 89.2V87.4Q2161.6 85.2 2164 85.2H2177Q2179.4 85.2 2179.4 87.4V89.2Z" fill="#111"/><path d="M2162.8 90.2H2178.2V103.8Q2178.2 105.7 2176.3 105.7H2164.7Q2162.8 105.7 2162.8 103.8Z" fill="#111"/><rect x="2164.4" y="91.2" width="1.5" height="12.6" fill="#8e8e8e"/><rect x="2166.0" y="91.2" width="1.5" height="12.6" fill="#fff"/><rect x="2168.3" y="91.2" width="1.5" height="12.6" fill="#9a9a9a"/><rect x="2171.3" y="91.2" width="1.5" height="12.6" fill="#9a9a9a"/><rect x="2172.9" y="91.2" width="1.5" height="12.6" fill="#fff"/><rect x="2175.3" y="91.2" width="1.5" height="12.6" fill="#8e8e8e"/><rect x="2280.8" y="82.8" width="20.3" height="22.6" fill="#fff" stroke="#2a2a2a" stroke-width="1.7"/><rect x="2284.2" y="85.8" width="13.6" height="2.7" fill="#111"/><rect x="2293.7" y="96.3" width="4.3" height="4.5" fill="#8c8c8c"/><path d="M2407.6 92.5A9.7 9.7 0 1 1 2411.6 102.1" fill="none" stroke="#111" stroke-width="3.3"/><polygon points="2402.7,91.6 2412.4,93.3 2406.2,100.6" fill="#111"/><path d="M2414.9 87.7L2417.7 94.9L2422.4 92.2" fill="none" stroke="#111" stroke-width="1.8"/><path d="M2488 86.2L2505.2 102.8M2505.2 86.2L2488 102.8" stroke="#111" stroke-width="4.7"/><g transform="translate(1831.2,18)"><circle cx="10" cy="2.6" r="1.5" fill="none" stroke="#111" stroke-width="1.1"/><path d="M10 3.8C5.4 3.8 4.4 8.4 4.2 12.2C4 16.6 2.6 18.4 0.4 20V20.6H19.6V20C17.4 18.4 16 16.6 15.8 12.2C15.6 8.4 14.6 3.8 10 3.8Z" fill="#111"/><path d="M7.6 21.4A2.5 2.5 0 0 0 12.4 21.4Z" fill="#111"/><path d="M6 15.5C6.2 10.2 7 7.2 9.4 6" fill="none" stroke="#fff" stroke-width="1.1"/></g><polyline points="1984.6,32.3 1989.6,37.4 1994.6,32.3" fill="none" stroke="#bcbcbc" stroke-width="2.7"/><circle cx="2044.1" cy="30.1" r="10.9" fill="none" stroke="#111" stroke-width="2.4"/><circle cx="2040.1" cy="26.6" r="1.8" fill="#111"/><circle cx="2048.2" cy="26.6" r="1.8" fill="#111"/><path d="M2037.6 32.4Q2044.1 40.4 2050.6 32.4" fill="none" stroke="#111" stroke-width="2.2"/><circle cx="2197.3" cy="30.1" r="11.1" fill="none" stroke="#111" stroke-width="2.4"/><circle cx="2339" cy="25.1" r="6.2" fill="#111"/><path d="M2329.4 40.6C2329.4 34.6 2332.4 31.4 2336 30.8Q2339 32.6 2342 30.8C2345.6 31.4 2348.5 34.6 2348.5 40.6Q2339 44 2329.4 40.6Z" fill="#111"/><polyline points="2535.8,30.8 2541.6,36.7 2547.4,30.8" fill="none" stroke="#bcbcbc" stroke-width="2.9"/><polyline points="406.8,123.6 412.3,129.2 417.8,123.6" fill="none" stroke="#111" stroke-width="2.7"/><polyline points="423.9,223.6 429,228.8 434.1,223.6" fill="none" stroke="#111" stroke-width="2.5"/><path d="M122.2 112.2L128.2 117.8L122.2 123.4M127.4 112.2L133.4 117.8L127.4 123.4" fill="none" stroke="#4a4f55" stroke-width="1.7"/><rect x="205.1" y="114.3" width="13.6" height="22" fill="#111"/><rect x="213.1" y="125.2" width="13.9" height="11.1" fill="#111" stroke="#fff" stroke-width="0.6"/><rect x="206.70000000000002" y="116.2" width="1.2" height="2.6" fill="#f0f0f0"/><rect x="206.70000000000002" y="120.9" width="1.2" height="2.6" fill="#f0f0f0"/><rect x="206.70000000000002" y="125.60000000000001" width="1.2" height="2.6" fill="#f0f0f0"/><rect x="206.70000000000002" y="130.29999999999998" width="1.2" height="2.6" fill="#f0f0f0"/><rect x="209.9" y="116.2" width="1.2" height="2.6" fill="#f0f0f0"/><rect x="209.9" y="120.9" width="1.2" height="2.6" fill="#f0f0f0"/><rect x="209.9" y="125.60000000000001" width="1.2" height="2.6" fill="#f0f0f0"/><rect x="209.9" y="130.29999999999998" width="1.2" height="2.6" fill="#f0f0f0"/><rect x="213.1" y="116.2" width="1.2" height="2.6" fill="#f0f0f0"/><rect x="213.1" y="120.9" width="1.2" height="2.6" fill="#f0f0f0"/><rect x="216.3" y="116.2" width="1.2" height="2.6" fill="#f0f0f0"/><rect x="216.3" y="120.9" width="1.2" height="2.6" fill="#f0f0f0"/><rect x="214.5" y="127.39999999999999" width="1.2" height="2.6" fill="#f0f0f0"/><rect x="214.5" y="132.1" width="1.2" height="2.6" fill="#f0f0f0"/><rect x="217.70000000000002" y="127.39999999999999" width="1.2" height="2.6" fill="#f0f0f0"/><rect x="221.0" y="127.39999999999999" width="1.2" height="2.6" fill="#f0f0f0"/><rect x="224.20000000000002" y="127.39999999999999" width="1.2" height="2.6" fill="#f0f0f0"/><rect x="224.20000000000002" y="132.1" width="1.2" height="2.6" fill="#f0f0f0"/><rect x="217.9" y="132.4" width="4.4" height="3.9" fill="#7b9bc8"/><path d="M113.2 341.6C113.2 339.4 137.8 339.4 137.8 341.6C137.8 343 134 344.4 133 345.2L128.2 351.4V361L122.8 362.6V351.4L118 345.2C117 344.4 113.2 343 113.2 341.6Z" fill="#454545"/><ellipse cx="125.5" cy="341.6" rx="10" ry="1.3" fill="#b4b4b4"/></svg>
<span class="t" style="left:2191.61px;top:21px;font-size:19px;font-weight:700;color:#111;">?</span>
<span class="t" style="left:2284.38px;top:92px;font-size:11px;font-weight:700;color:#111;transform:scaleX(1.2167);">X</span>
<svg style="left:0;top:0" width="100" height="1000" viewBox="0 0 100 1000"><g transform="translate(16,30) scale(1,1)"><path d="M0 16.9C14 13.5 30 6.5 41.8 0.9L32.8 20.2C28 15.5 14 15.2 0 16.9Z" fill="#1f74c0"/><path d="M43.8 0.1L61.3 20.8C52 17.6 42 17.8 33.8 20.8Z" fill="#8cc63e"/></g><path d="M29.9 130.2L49.1 112.6L68.3 130.2" fill="none" stroke="#4588d2" stroke-width="4.2" stroke-linejoin="miter"/><path d="M49.1 117.4L63.8 131.4V147.4H34.7V131.4Z" fill="#fff"/><rect x="37.7" y="133.5" width="8.1" height="4.6" fill="#303842"/><rect x="49.7" y="133.5" width="7.7" height="14" fill="#303842"/><g transform="translate(34.6,216.3)"><rect x="-5.6" y="-18.3" width="11.2" height="36.6" rx="1" fill="#fff"/><rect x="-4.1" y="-15" width="8.2" height="15.3" fill="#303842"/><rect x="-3.1" y="-13.3" width="6.2" height="3.2" fill="#3d7cc4"/><circle cx="0.1" cy="10.8" r="2.8" fill="#2a313a"/></g><g transform="translate(46.3,216.3)"><rect x="-5.6" y="-18.3" width="11.2" height="36.6" rx="1" fill="#fff"/><rect x="-4.1" y="-15" width="8.2" height="15.3" fill="#303842"/><rect x="-3.1" y="-13.3" width="6.2" height="3.2" fill="#3d7cc4"/><circle cx="0.1" cy="10.8" r="2.8" fill="#2a313a"/></g><g transform="translate(61.5,215.9) rotate(-11)"><rect x="-5.6" y="-18.3" width="11.2" height="36.6" rx="1" fill="#fff"/><rect x="-4.1" y="-15" width="8.2" height="15.3" fill="#303842"/><rect x="-3.1" y="-13.3" width="6.2" height="3.2" fill="#3d7cc4"/><circle cx="0.1" cy="10.8" r="2.8" fill="#2a313a"/></g><rect x="36.2" y="287.5" width="26.1" height="32" rx="2.5" fill="none" stroke="#fff" stroke-width="3.1"/><path d="M38.8 287.5C38.8 284.5 40.5 283.6 42.6 283C43.5 280 46 278.3 49 278.3C52 278.3 54.6 280 55.4 283C57.5 283.6 59.1 284.5 59.1 287.5C59.1 289.5 58 290.3 56 290.3H42C40 290.3 38.8 289.5 38.8 287.5Z" fill="#fff"/><circle cx="49.1" cy="281.4" r="1" fill="#303842"/><rect x="42.4" y="285.2" width="13.4" height="3.4" rx="1.7" fill="#8e9297"/><rect x="43.6" y="286.4" width="11" height="1" fill="#e8e8e8"/><path d="M42.9 298.4L47 302.3L56.2 294" fill="none" stroke="#4588d2" stroke-width="3.4"/><path d="M42.9 310L47 313.9L56.2 305.6" fill="none" stroke="#4588d2" stroke-width="3.4"/><rect x="33.15" y="367.65" width="31.6" height="38.8" fill="none" stroke="#fff" stroke-width="3.1"/><rect x="37.2" y="372.2" width="23.5" height="6.1" fill="#fff"/><polygon points="41.6,383.3 41.6,399.6 56.6,391" fill="#3f86d4"/><rect x="34.4" y="453.3" width="29.4" height="40.8" rx="2.8" fill="#fff"/><rect x="38" y="456.7" width="22.2" height="7.8" rx="1.4" fill="#3f86d4" stroke="#3a4652" stroke-width="0.9"/><circle cx="41.6" cy="472" r="2.75" fill="#39444f"/><circle cx="41.6" cy="479.3" r="2.75" fill="#39444f"/><circle cx="41.6" cy="486.5" r="2.75" fill="#39444f"/><circle cx="49" cy="472" r="2.75" fill="#39444f"/><circle cx="49" cy="479.3" r="2.75" fill="#39444f"/><circle cx="49" cy="486.5" r="2.75" fill="#39444f"/><circle cx="56.3" cy="472" r="2.75" fill="#39444f"/><circle cx="56.3" cy="479.3" r="2.75" fill="#39444f"/><circle cx="56.3" cy="486.5" r="2.75" fill="#39444f"/><path d="M37.2 547.9A16.2 16.2 0 0 1 61 547.9" fill="none" stroke="#3f7fc6" stroke-width="2.4"/><path d="M37.2 571.5A16.2 16.2 0 0 0 61 571.5" fill="none" stroke="#3f7fc6" stroke-width="2.4"/><path d="M30.3 551.2H38.2L43.7 556.8V568.4H30.3Z" fill="#303842" stroke="#fff" stroke-width="2.4"/><path d="M37.6 551.2V557.4H43.7Z" fill="#fff"/><circle cx="62.1" cy="555.5" r="6.3" fill="#fff" stroke="#303842" stroke-width="1"/><path d="M54.6 566.5C54.6 562.8 57 561.5 59 561C61 562.3 63.2 562.3 65.2 561C67.2 561.5 69.6 562.8 69.6 566.5C69.6 568.6 67.5 569.6 62.1 569.6C56.7 569.6 54.6 568.6 54.6 566.5Z" fill="#fff"/><rect x="43.2" y="628.6" width="11.8" height="7.9" rx="2.2" fill="none" stroke="#fff" stroke-width="3.2"/><rect x="43.2" y="643.3000000000001" width="11.8" height="7.9" rx="2.2" fill="none" stroke="#fff" stroke-width="3.2"/><rect x="43.2" y="658.1" width="11.8" height="7.9" rx="2.2" fill="none" stroke="#fff" stroke-width="3.2"/><path d="M38.8 636.4A4 4 0 1 0 36.5 643.6" fill="none" stroke="#3f7fc6" stroke-width="2.1"/><polygon points="36,640.6 40,643.6 36,646.2" fill="#3f7fc6"/><path d="M60 650.6A4 4 0 1 1 62.4 658" fill="none" stroke="#3f7fc6" stroke-width="2.1"/><polygon points="63,655 58.8,658 63,660.6" fill="#3f7fc6"/><path d="M44.6 737.4L35.4 747.6" stroke="#3f86d4" stroke-width="6.6" stroke-linecap="round"/><path d="M50.6 717.6C54 714.6 59 715 62 717.6L65.5 720.6L66.8 719.6L71.2 724.4L64.6 731.6L60.4 727.2L61.4 726L59.6 724.4L53.2 731.4L49.4 727.6L55 721.4C53.8 719.2 52.4 718 50.6 717.6Z" fill="#fff"/><circle cx="39" cy="725.6" r="10.9" fill="#fff"/><path d="M47.6 728.8L58.3 739.2A6.4 6.4 0 1 1 53 744.7L41 733.4Z" fill="#fff"/><circle cx="33.6" cy="720.6" r="6.5" fill="#303842"/><circle cx="59.5" cy="745.6" r="2.6" fill="#2a313a"/><path d="M36.6 811.8C37.4 808.4 39.2 806.7 41.2 806.1C41.6 801.7 45 799.4 48.6 799.4C52.2 799.4 55 801.5 56.1 804.5C58.4 802.4 62.4 802.6 65 804.8C67.8 807.2 68.4 810.8 67.4 813.6C69.6 816.4 68.8 821.2 63.4 822.3H53" fill="none" stroke="#4588d2" stroke-width="2.2"/><rect x="28.9" y="813.6" width="23" height="8.9" rx="3.2" fill="#fff"/><rect x="32.2" y="817.1" width="8" height="2" fill="#2a313a"/><rect x="28.9" y="822.6" width="23" height="8.9" rx="3.2" fill="#fff"/><rect x="32.2" y="826.1" width="8" height="2" fill="#2a313a"/><rect x="28.9" y="831.5" width="23" height="8.9" rx="3.2" fill="#fff"/><rect x="32.2" y="835.0" width="8" height="2" fill="#2a313a"/><path d="M52.2 925.7 L46.0 925.7 L45.8 920.5 L42.6 919.4 L39.2 923.2 L34.4 919.2 L37.6 915.1 L35.9 912.2 L30.8 912.9 L29.7 906.8 L34.7 905.7 L35.3 902.3 L31.0 899.6 L34.1 894.2 L38.6 896.6 L41.2 894.5 L39.6 889.6 L45.5 887.4 L47.4 892.2 L50.8 892.2 L52.7 887.4 L58.6 889.6 L57.0 894.5 L59.6 896.6 L64.1 894.2 L67.2 899.6 L62.9 902.3 L63.5 905.7 L68.5 906.8 L67.4 912.9 L62.3 912.2 L60.6 915.1 L63.8 919.2 L59.0 923.2 L55.6 919.4 L52.4 920.5Z" fill="#fff" stroke="#fff" stroke-width="1.6" stroke-linejoin="round"/><circle cx="49.1" cy="906.5" r="8.3" fill="#303842"/></svg>
<svg style="left:255px;top:375px" width="80" height="40" viewBox="255 375 80 40"><g transform="translate(262,382.3) scale(0.915,1.0)"><path d="M0 16.9C14 13.5 30 6.5 41.8 0.9L32.8 20.2C28 15.5 14 15.2 0 16.9Z" fill="#1f74c0"/><path d="M43.8 0.1L61.3 20.8C52 17.6 42 17.8 33.8 20.8Z" fill="#8cc63e"/></g></svg>
<span class="t" style="left:219.91px;top:402px;font-size:33px;font-weight:400;color:#262626;transform:scaleX(1.1870);">solver</span>
</div></div></body></html>
